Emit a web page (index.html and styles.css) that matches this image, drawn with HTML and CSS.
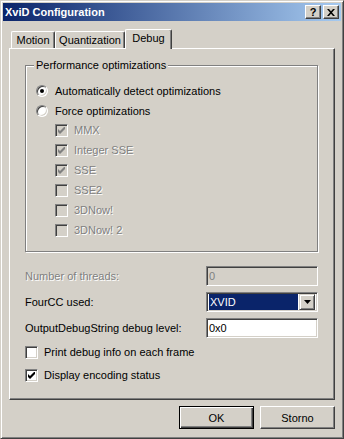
FILE: index.html
```html
<!DOCTYPE html>
<html lang="en">
<head>
    <meta charset="UTF-8">
    <meta name="viewport" content="width=device-width, initial-scale=1.0">
    <title>XviD Configuration</title>
    <link rel="stylesheet" href="styles.css">
</head>
<body>
    <div class="window">
        <div class="titlebar">
            <span class="title">XviD Configuration</span>
            <div class="title-buttons">
                <span class="tbtn">?</span>
                <span class="tbtn">
                    <svg width="8" height="7" viewBox="0 0 8 7"><path d="M0 0h2l2 2.2 2-2.2h2L5 3.5 8 7H6L4 4.8 2 7H0l3-3.5z"/></svg>
                </span>
            </div>
        </div>

        <div class="content">
            <div class="tabs">
                <div class="tab tab-motion">Motion</div>
                <div class="tab tab-quant">Quantization</div>
                <div class="tab tab-debug active">Debug</div>
            </div>

            <div class="panel">
                <!-- Performance group -->
                <div class="group">
                    <span class="group-label">Performance optimizations</span>
                    <div class="opt">
                        <span class="radio checked"></span>
                        <span>Automatically detect optimizations</span>
                    </div>
                    <div class="opt">
                        <span class="radio"></span>
                        <span>Force optimizations</span>
                    </div>
                    <div class="checks">
                        <div class="opt disabled">
                            <span class="check checked"><svg width="7" height="7" viewBox="0 0 7 7"><path d="M0 2l2 2 5-5v3l-5 5-2-2z"/></svg></span>
                            <span>MMX</span>
                        </div>
                        <div class="opt disabled">
                            <span class="check checked"><svg width="7" height="7" viewBox="0 0 7 7"><path d="M0 2l2 2 5-5v3l-5 5-2-2z"/></svg></span>
                            <span>Integer SSE</span>
                        </div>
                        <div class="opt disabled">
                            <span class="check checked"><svg width="7" height="7" viewBox="0 0 7 7"><path d="M0 2l2 2 5-5v3l-5 5-2-2z"/></svg></span>
                            <span>SSE</span>
                        </div>
                        <div class="opt disabled">
                            <span class="check"></span>
                            <span>SSE2</span>
                        </div>
                        <div class="opt disabled">
                            <span class="check"></span>
                            <span>3DNow!</span>
                        </div>
                        <div class="opt disabled">
                            <span class="check"></span>
                            <span>3DNow! 2</span>
                        </div>
                    </div>
                </div>

                <!-- Fields -->
                <div class="field disabled first">
                    <span>Number of threads:</span>
                    <div class="input">0</div>
                </div>
                <div class="field">
                    <span>FourCC used:</span>
                    <div class="input combo">
                        <span class="combo-value">XVID</span>
                        <span class="combo-btn"><svg width="7" height="4" viewBox="0 0 7 4"><path d="M0 0h7L3.5 4z"/></svg></span>
                    </div>
                </div>
                <div class="field">
                    <span>OutputDebugString debug level:</span>
                    <div class="input">0x0</div>
                </div>

                <div class="opt flag first-flag">
                    <span class="check"></span>
                    <span>Print debug info on each frame</span>
                </div>
                <div class="opt flag">
                    <span class="check checked"><svg width="7" height="7" viewBox="0 0 7 7"><path d="M0 2l2 2 5-5v3l-5 5-2-2z"/></svg></span>
                    <span>Display encoding status</span>
                </div>
            </div>

            <div class="buttons">
                <button class="btn default">OK</button>
                <button class="btn">Storno</button>
            </div>
        </div>
    </div>
</body>
</html>
```
FILE: styles.css
```css
/* Basic Reset */
* {
    box-sizing: border-box;
    margin: 0;
    padding: 0;
}

body {
    font-family: "Liberation Sans", Arial, sans-serif;
    font-size: 11px;
    color: #000;
    background-color: #d4d0c8;
}

.window {
    width: 344px;
    height: 439px;
    padding: 2px;
    background-color: #d4d0c8;
    border: 1px solid;
    border-color: #d4d0c8 #404040 #404040 #d4d0c8;
    box-shadow: inset 1px 1px #fff, inset -1px -1px #808080;
}

/* Title bar */
.titlebar {
    height: 18px;
    display: flex;
    align-items: center;
    justify-content: space-between;
    padding: 0 2px 0 2px;
    background: linear-gradient(to right, #0a246a, #a6caf0);
    color: #fff;
    font-weight: bold;
}

.title-buttons {
    display: flex;
    gap: 2px;
}

.tbtn {
    width: 16px;
    height: 14px;
    display: flex;
    align-items: center;
    justify-content: center;
    background-color: #d4d0c8;
    color: #000;
    font-weight: bold;
    font-size: 11px;
    border: 1px solid;
    border-color: #fff #404040 #404040 #fff;
    box-shadow: inset -1px -1px #808080;
}

/* Tabs */
.content {
    padding: 0 6px;
}

.tabs {
    display: flex;
    align-items: flex-end;
    height: 19px;
    margin-top: 8px;
    padding-left: 2px;
}

.tab {
    height: 17px;
    display: flex;
    align-items: center;
    justify-content: center;
    background-color: #d4d0c8;
    border-top: 1px solid #fff;
    border-left: 1px solid #fff;
    border-right: 1px solid #404040;
    border-radius: 2px 2px 0 0;
    box-shadow: inset -1px 0 #808080;
}

.tab-motion {
    width: 44px;
}

.tab-quant {
    width: 70px;
}

.tab-debug {
    width: 47px;
}

.tab.active {
    height: 20px;
    margin-bottom: -1px;
    padding-bottom: 3px;
    position: relative;
    z-index: 1;
}

.panel {
    height: 352px;
    padding: 16px 16px 0 15px;
    border: 1px solid;
    border-color: #fff #404040 #404040 #fff;
    box-shadow: inset -1px -1px #808080;
}

/* Group box */
.group {
    position: relative;
    height: 187px;
    padding: 19px 0 0 10px;
    border: 1px solid #808080;
    box-shadow: inset 1px 1px #fff, 1px 1px #fff;
}

.group-label {
    position: absolute;
    top: -7px;
    left: 8px;
    padding: 0 2px;
    background-color: #d4d0c8;
}

.opt {
    height: 20px;
    display: flex;
    align-items: flex-start;
    gap: 7px;
    line-height: 13px;
}

.checks {
    margin: -1px 0 0 19px;
}

.checks .opt {
    gap: 6px;
}

.disabled {
    color: #808080;
    text-shadow: 1px 1px #fff;
}

.radio {
    position: relative;
    width: 12px;
    height: 12px;
    margin-top: 0;
    border-radius: 50%;
    background-color: #fff;
    border: 1px solid;
    border-color: #808080 #fff #fff #808080;
    box-shadow: inset 1px 1px #404040, inset -1px -1px #d4d0c8;
}

.radio.checked::after {
    content: "";
    position: absolute;
    top: 3px;
    left: 3px;
    width: 4px;
    height: 4px;
    border-radius: 50%;
    background-color: #000;
}

.check {
    width: 13px;
    height: 13px;
    flex-shrink: 0;
    display: flex;
    align-items: center;
    justify-content: center;
    background-color: #fff;
    border: 1px solid;
    border-color: #808080 #fff #fff #808080;
    box-shadow: inset 1px 1px #404040, inset -1px -1px #d4d0c8;
}

.check svg {
    fill: #000;
}

.disabled .check {
    background-color: #d4d0c8;
}

.disabled .check svg {
    fill: #808080;
}

/* Fields */
.field {
    height: 20px;
    display: flex;
    align-items: center;
    justify-content: space-between;
    margin-top: 6px;
}

.field.first {
    margin-top: 14px;
}

.input {
    width: 112px;
    height: 20px;
    display: flex;
    align-items: center;
    padding-left: 2px;
    background-color: #fff;
    text-shadow: none;
    border: 1px solid;
    border-color: #808080 #fff #fff #808080;
    box-shadow: inset 1px 1px #404040, inset -1px -1px #d4d0c8;
}

.disabled .input {
    background-color: #d4d0c8;
}

.input.combo {
    padding: 2px;
    justify-content: space-between;
}

.combo-value {
    flex: 1;
    height: 16px;
    line-height: 16px;
    margin-right: 1px;
    padding-left: 1px;
    background-color: #0a246a;
    color: #fff;
}

.combo-btn {
    width: 16px;
    height: 16px;
    display: flex;
    align-items: center;
    justify-content: center;
    background-color: #d4d0c8;
    border: 1px solid;
    border-color: #d4d0c8 #404040 #404040 #d4d0c8;
    box-shadow: inset 1px 1px #fff, inset -1px -1px #808080;
}

.flag {
    gap: 6px;
}

.first-flag {
    margin-top: 8px;
    height: 23px;
}

/* Dialog buttons */
.buttons {
    display: flex;
    justify-content: flex-end;
    gap: 6px;
    margin-top: 6px;
}

.btn {
    width: 75px;
    height: 23px;
    font-family: inherit;
    font-size: 11px;
    color: #000;
    background-color: #d4d0c8;
    border: 1px solid;
    border-color: #fff #404040 #404040 #fff;
    box-shadow: inset -1px -1px #808080;
}

.btn.default {
    border-color: #000;
    box-shadow: inset 1px 1px #fff, inset -1px -1px #404040, inset -2px -2px #808080;
}
```
